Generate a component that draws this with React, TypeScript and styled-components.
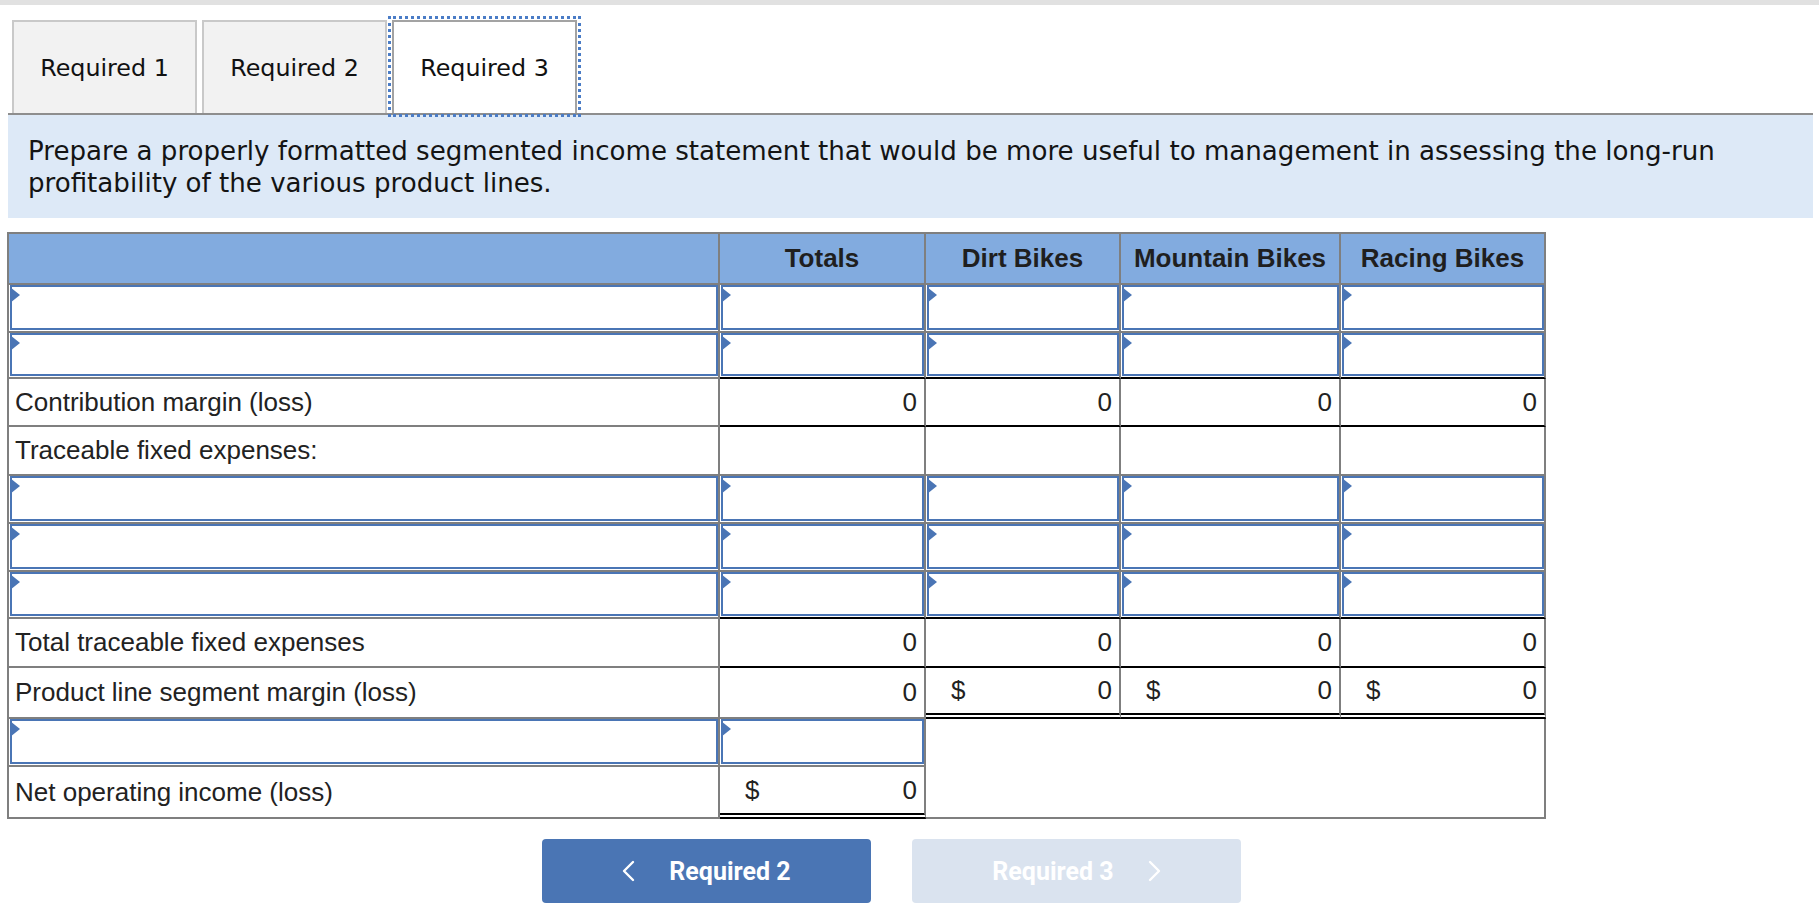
import React from "react";
import styled, { createGlobalStyle, css } from "styled-components";

const GRAY = "#7f7f7f";
const BLUE = "#4a75b5";

const Global = createGlobalStyle`
  html, body { margin: 0; padding: 0; background: #fff; }
  * { box-sizing: border-box; }
`;

const Page = styled.div`
  width: 1819px;
  min-height: 920px;
  background: #fff;
`;

const TopBar = styled.div`
  height: 5px;
  background: #e1e1e1;
`;

const Content = styled.div`
  padding: 0 6px 0 7px;
`;

const TabStrip = styled.div`
  margin: 15px 0 0 1px;
  padding-left: 4px;
  display: flex;
  align-items: flex-end;
  gap: 5px;
  border-bottom: 2px solid #8e8e8e;
`;

const Tab = styled.button<{ $active?: boolean }>`
  width: 185px;
  height: 93px;
  padding: 0;
  display: flex;
  align-items: center;
  justify-content: center;
  font-family: "DejaVu Sans", Verdana, sans-serif;
  font-size: 23.8px;
  color: #111;
  background: #f2f2f2;
  border: 2px solid #c9c9c9;
  border-bottom: none;
  cursor: pointer;
  ${(p) =>
    p.$active &&
    css`
      background: #fff;
      border-color: #a3a3a3;
      outline: 3px dotted #4a7cc6;
      outline-offset: 1px;
    `}
`;

const Instructions = styled.div`
  margin-left: 1px;
  padding: 20px 20px 19px 20px;
  background: #dde9f7;
  font-family: "DejaVu Sans", Verdana, sans-serif;
  font-size: 26.1px;
  line-height: 32px;
  color: #141414;
`;

const Sheet = styled.div`
  margin-top: 14px;
  width: 1539px;
  display: grid;
  grid-template-columns: 711px 206px 195px 220px 205px;
  grid-template-rows: 51px 48px 46px 48px 49px 48px 48px 47px 49px 51px 48px 52px;
  border-top: 2px solid ${GRAY};
  border-left: 2px solid ${GRAY};
  font-family: "Liberation Sans", Arial, sans-serif;
  font-size: 26px;
  color: #222;
`;

type Bottom = "gray" | "black" | "double";

const bottomRule = (b: Bottom = "gray") =>
  b === "black"
    ? css`border-bottom: 2px solid #000;`
    : b === "double"
    ? css`border-bottom: 6px double #000;`
    : css`border-bottom: 2px solid ${GRAY};`;

const HeadCell = styled.div`
  background: #82abdf;
  border-right: 2px solid ${GRAY};
  border-bottom: 2px solid ${GRAY};
  display: flex;
  align-items: center;
  justify-content: center;
  font-weight: 700;
  color: #1f1f1f;
  white-space: nowrap;
`;

const LabelCell = styled.div<{ $bottom?: Bottom }>`
  border-right: 2px solid ${GRAY};
  ${(p) => bottomRule(p.$bottom)}
  display: flex;
  align-items: center;
  padding-left: 6px;
  white-space: nowrap;
`;

const ValueCell = styled.div<{ $bottom?: Bottom }>`
  border-right: 2px solid ${GRAY};
  ${(p) => bottomRule(p.$bottom)}
  display: flex;
  align-items: center;
  justify-content: space-between;
  padding: 0 7px 0 25px;
`;

const Blank = styled.div<{ $bottom?: Bottom }>`
  border-right: 2px solid ${GRAY};
  ${(p) => bottomRule(p.$bottom)}
`;

const Merged = styled.div`
  grid-column: span 3;
  grid-row: span 2;
  border-right: 2px solid ${GRAY};
  border-bottom: 2px solid ${GRAY};
`;

const EntryCell = styled.div<{ $bottom?: Bottom }>`
  border-right: 2px solid ${GRAY};
  ${(p) => bottomRule(p.$bottom)}
  padding: 0 0 1px 1px;
  display: flex;
`;

const EntryBox = styled.div`
  position: relative;
  flex: 1;
  display: flex;
`;

const EntryInput = styled.input`
  flex: 1;
  width: 100%;
  border: 2px solid ${BLUE};
  border-radius: 0;
  background: #fff;
  font-family: "Liberation Sans", Arial, sans-serif;
  font-size: 26px;
  padding: 0 6px;
  outline: none;
`;

const Flag = styled.span`
  position: absolute;
  left: 0;
  top: 2px;
  width: 0;
  height: 0;
  border-top: 8px solid transparent;
  border-bottom: 8px solid transparent;
  border-left: 10px solid ${BLUE};
`;

const Nav = styled.div`
  margin-top: 20px;
  padding-left: 535px;
  display: flex;
  gap: 41px;
`;

const NavButton = styled.button<{ $disabled?: boolean }>`
  width: 329px;
  height: 64px;
  border: none;
  border-radius: 4px;
  background: ${(p) => (p.$disabled ? "#dae3ef" : "#4a75b4")};
  color: #fff;
  font-family: Roboto, "Liberation Sans", Arial, sans-serif;
  font-weight: 700;
  font-size: 25px;
  display: flex;
  align-items: center;
  justify-content: center;
  gap: 34px;
  padding-top: 1px;
  cursor: ${(p) => (p.$disabled ? "default" : "pointer")};
`;

const Chevron = ({ dir }: { dir: "left" | "right" }) => (
  <svg width="13" height="22" viewBox="0 0 13 22" fill="none">
    <polyline
      points={dir === "left" ? "11,2 2,11 11,20" : "2,2 11,11 2,20"}
      stroke="#fff"
      strokeWidth="2.4"
      strokeLinecap="round"
      strokeLinejoin="round"
    />
  </svg>
);

const Entry = ({ bottom }: { bottom?: Bottom }) => (
  <EntryCell $bottom={bottom}>
    <EntryBox>
      <EntryInput type="text" aria-label="entry" />
      <Flag />
    </EntryBox>
  </EntryCell>
);

const EntryRow = ({ numBottom }: { numBottom?: Bottom }) => (
  <>
    <Entry />
    <Entry bottom={numBottom} />
    <Entry bottom={numBottom} />
    <Entry bottom={numBottom} />
    <Entry bottom={numBottom} />
  </>
);

const Value = ({ v, dollar, bottom }: { v: string; dollar?: boolean; bottom?: Bottom }) => (
  <ValueCell $bottom={bottom}>
    <span>{dollar ? "$" : ""}</span>
    <span>{v}</span>
  </ValueCell>
);

export default function App() {
  return (
    <Page>
      <Global />
      <TopBar />
      <Content>
        <TabStrip>
          <Tab>Required 1</Tab>
          <Tab>Required 2</Tab>
          <Tab $active>Required 3</Tab>
        </TabStrip>
        <Instructions>
          Prepare a properly formatted segmented income statement that would be more useful to management in
          assessing the long-run profitability of the various product lines.
        </Instructions>

        <Sheet>
          <HeadCell />
          <HeadCell>Totals</HeadCell>
          <HeadCell>Dirt Bikes</HeadCell>
          <HeadCell>Mountain Bikes</HeadCell>
          <HeadCell>Racing Bikes</HeadCell>

          <EntryRow />
          <EntryRow numBottom="black" />

          <LabelCell>Contribution margin (loss)</LabelCell>
          <Value v="0" bottom="black" />
          <Value v="0" bottom="black" />
          <Value v="0" bottom="black" />
          <Value v="0" bottom="black" />

          <LabelCell>Traceable fixed expenses:</LabelCell>
          <Blank />
          <Blank />
          <Blank />
          <Blank />

          <EntryRow />
          <EntryRow />
          <EntryRow numBottom="black" />

          <LabelCell>Total traceable fixed expenses</LabelCell>
          <Value v="0" bottom="black" />
          <Value v="0" bottom="black" />
          <Value v="0" bottom="black" />
          <Value v="0" bottom="black" />

          <LabelCell>Product line segment margin (loss)</LabelCell>
          <Value v="0" />
          <Value v="0" dollar bottom="double" />
          <Value v="0" dollar bottom="double" />
          <Value v="0" dollar bottom="double" />

          <Entry />
          <Entry />
          <Merged />

          <LabelCell>Net operating income (loss)</LabelCell>
          <Value v="0" dollar bottom="double" />
        </Sheet>

        <Nav>
          <NavButton>
            <Chevron dir="left" />
            <span>Required 2</span>
          </NavButton>
          <NavButton $disabled>
            <span>Required 3</span>
            <Chevron dir="right" />
          </NavButton>
        </Nav>
      </Content>
    </Page>
  );
}
